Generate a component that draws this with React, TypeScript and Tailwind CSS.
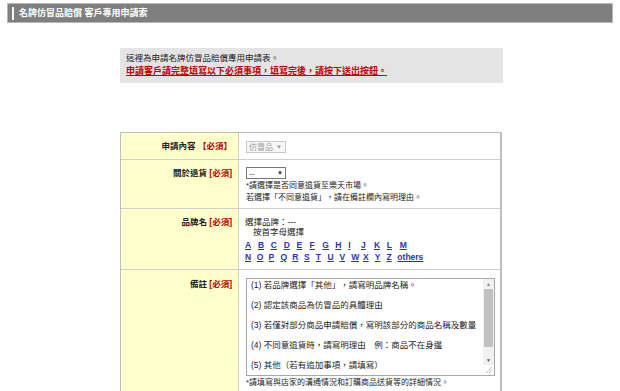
import React from 'react';

const letters1 = ['A', 'B', 'C', 'D', 'E', 'F', 'G', 'H', 'I', 'J', 'K', 'L', 'M'];
const letters2 = ['N', 'O', 'P', 'Q', 'R', 'S', 'T', 'U', 'V', 'W', 'X', 'Y', 'Z'];

const notes = [
  '(1) 若品牌選擇「其他」，請寫明品牌名稱。',
  '(2) 認定該商品為仿冒品的具體理由',
  '(3) 若僅對部分商品申請賠償，寫明該部分的商品名稱及數量',
  '(4) 不同意退貨時，請寫明理由　例：商品不在身邊',
  '(5) 其他（若有追加事項，請填寫）',
];

const Required: React.FC<{ wide?: boolean }> = ({ wide }) => (
  <span className="text-[#b80000]">{wide ? ' 【必須】' : ' [必須]'}</span>
);

const App: React.FC = () => {
  return (
    <div
      className="w-[620px] h-[391px] overflow-hidden bg-white text-[#222] text-[8.5px] leading-[11px]"
      style={{ fontFamily: '"Liberation Sans", "Noto Sans CJK TC", sans-serif' }}
    >
      {/* タイトルバー */}
      <div className="mx-[7px] mt-[3px] h-[20px] border border-[#b8b8b8] bg-[#7f7f7f] flex items-center pl-[4px]">
        <div className="w-[2px] h-[13px] bg-[#f4f4f4] mr-[5px]" />
        <span className="text-white font-bold text-[9px]">名牌仿冒品賠償 客戶專用申請索</span>
      </div>

      {/* 案内 */}
      <div className="ml-[120px] mt-[25px] w-[383px] h-[35px] bg-[#e4e4e4] pl-[6px] pt-[4px]">
        <p className="leading-[13px]">這裡為申請名牌仿冒品賠償專用申請表。</p>
        <p
          className="leading-[13px] text-[9px] text-[#c00000] font-bold underline"
          style={{ fontFamily: '"Liberation Serif", "Noto Sans CJK TC", serif' }}
        >
          申請客戶請完整填寫以下必須事項，填寫完後，請按下送出按鈕。
        </p>
      </div>

      {/* フォーム */}
      <div className="ml-[120px] mt-[49px] w-[382px] border-t border-l border-[#bdbdbd] border-r-2">
        <div className="grid grid-cols-[118px_1fr] border-b border-[#cfcfcf] h-[27px]">
          <div className="bg-[#ffffcc] border-r border-[#cfcfcf] text-right pr-[6px] pt-[8px] font-bold">
            申請內容<Required wide />
          </div>
          <div className="pl-[7px] pt-[8px]">
            <div className="w-[40px] h-[12px] border border-[#c8c8c8] bg-[#f7f7f7] text-[#999] flex items-center pl-[2px] text-[8px]">
              仿冒品 <span className="ml-[3px] text-[6px]">▼</span>
            </div>
          </div>
        </div>

        <div className="grid grid-cols-[118px_1fr] border-b border-[#cfcfcf] h-[49px]">
          <div className="bg-[#ffffcc] border-r border-[#cfcfcf] text-right pr-[6px] pt-[8px] font-bold">
            關於退貨<Required />
          </div>
          <div className="pl-[7px] pt-[7px]">
            <div className="w-[40px] h-[12px] border border-[#777] bg-white flex items-center justify-between px-[2px] text-[8px]">
              <span>--</span>
              <span className="text-[6px]">▼</span>
            </div>
            <p className="mt-[1px] leading-[12px] text-[8px]">*請選擇是否同意退貨至樂天市場。</p>
            <p className="leading-[12px] text-[8px]">若選擇「不同意退貨」，請在備註欄內寫明理由。</p>
          </div>
        </div>

        <div className="grid grid-cols-[118px_1fr] border-b border-[#cfcfcf] h-[61px]">
          <div className="bg-[#ffffcc] border-r border-[#cfcfcf] text-right pr-[6px] pt-[8px] font-bold">
            品牌名<Required />
          </div>
          <div className="pl-[6px] pt-[8px]">
            <p className="leading-[10px]">選擇品牌：---</p>
            <p className="leading-[10px] pl-[8px]">按首字母選擇</p>
            <div className="flex mt-[2px] leading-[12px]">
              {letters1.map((l) => (
                <a key={l} className="w-[12.9px] text-[#2a35b0] underline font-bold">{l}</a>
              ))}
            </div>
            <div className="flex leading-[13px]">
              {letters2.map((l) => (
                <a key={l} className="w-[11.8px] text-[#2a35b0] underline font-bold">{l}</a>
              ))}
              <a className="text-[#2a35b0] underline font-bold ml-[-1px]">others</a>
            </div>
          </div>
        </div>

        <div className="grid grid-cols-[118px_1fr] h-[130px]">
          <div className="bg-[#ffffcc] border-r border-[#cfcfcf] text-right pr-[6px] pt-[9px] font-bold">
            備註<Required />
          </div>
          <div className="pl-[7px] pt-[8px]">
            <div className="relative w-[249px] h-[98px] border border-[#a8a8a8] bg-white pl-[4px] pt-[1px] overflow-hidden">
              <div className="flex flex-col gap-[9px] leading-[11px] pr-[14px]">
                {notes.map((n) => (
                  <p key={n} className="whitespace-nowrap">{n}</p>
                ))}
              </div>
              {/* スクロールバー */}
              <div className="absolute right-0 top-0 w-[11px] h-[86px] bg-[#f1f1f1] flex flex-col items-center">
                <span className="text-[5px] leading-[10px] text-[#888]">▲</span>
                <div className="w-[9px] h-[58px] bg-[#c1c1c1]" />
                <span className="mt-auto text-[5px] leading-[10px] text-[#555]">▼</span>
              </div>
              <svg className="absolute right-[1px] bottom-[1px]" width="8" height="8" viewBox="0 0 8 8">
                <line x1="7" y1="1" x2="1" y2="7" stroke="#aaa" strokeWidth="0.8" />
                <line x1="7" y1="4" x2="4" y2="7" stroke="#aaa" strokeWidth="0.8" />
              </svg>
            </div>
            <p className="mt-[1px] text-[8px] leading-[12px]">*請填寫與店家的溝通情況和訂購商品送貨等的詳細情況。</p>
          </div>
        </div>
      </div>
    </div>
  );
};

export default App;
